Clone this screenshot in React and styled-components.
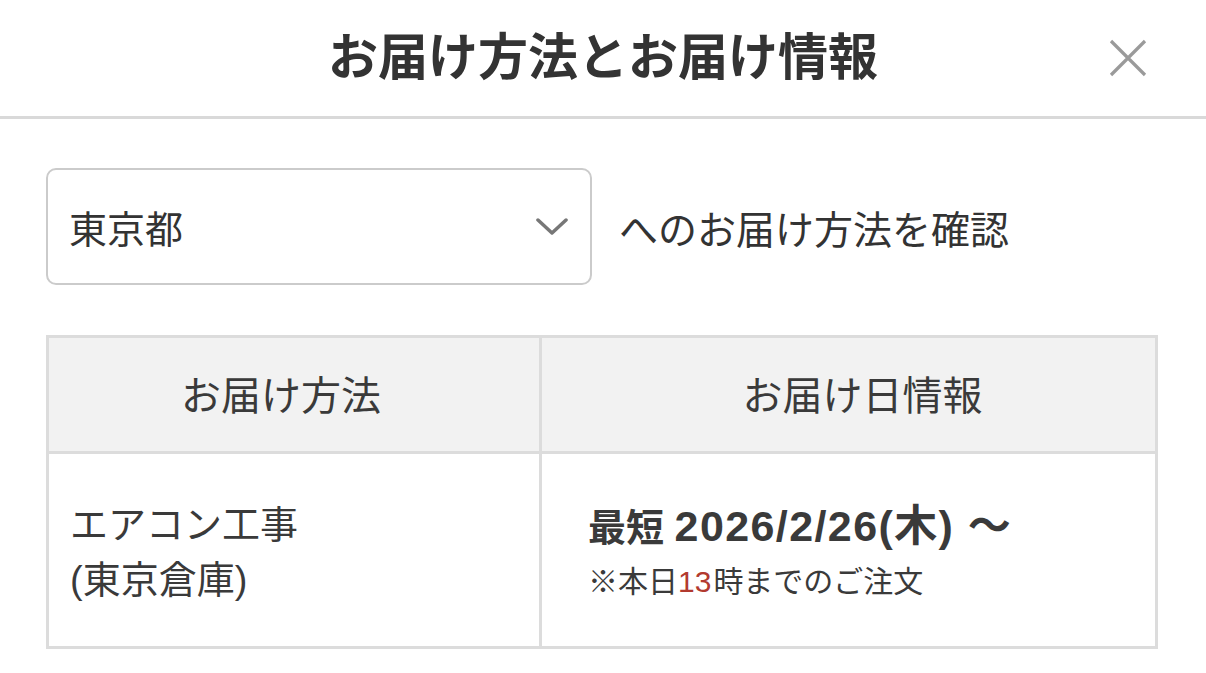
import React from "react";
import styled, { createGlobalStyle } from "styled-components";

const Global = createGlobalStyle`
  html, body { margin: 0; padding: 0; background: #fff; }
  body {
    font-family: "Liberation Sans", "Noto Sans CJK JP", sans-serif;
    color: #333;
  }
  * { box-sizing: border-box; }
`;

const Page = styled.div`
  width: 1206px;
  height: 673px;
  overflow: hidden;
  background: #fff;
`;

const Header = styled.header`
  position: relative;
  height: 119px;
  border-bottom: 3px solid #d9d9d9;
  display: flex;
  align-items: center;
  justify-content: center;
  padding-bottom: 10px;
`;

const Title = styled.h1`
  margin: 0;
  font-size: 50px;
  font-weight: 700;
  color: #333;
  letter-spacing: 0;
`;

const Close = styled.button`
  position: absolute;
  right: 58px;
  top: 38px;
  width: 40px;
  height: 40px;
  padding: 0;
  border: none;
  background: none;
  display: flex;
  align-items: center;
  justify-content: center;
`;

const Body = styled.main`
  padding: 49px 48px 0 46px;
  display: flex;
  flex-direction: column;
  gap: 50px;
`;

const SelectRow = styled.div`
  display: flex;
  align-items: center;
  gap: 27px;
`;

const Select = styled.div`
  width: 546px;
  height: 117px;
  border: 2px solid #cbcbcb;
  border-radius: 10px;
  display: flex;
  align-items: center;
  justify-content: space-between;
  padding: 0 22px 0 21px;
  font-size: 38px;
  color: #333;
`;

const Label = styled.span`
  font-size: 39px;
  color: #333;
`;

const Table = styled.div`
  display: grid;
  grid-template-columns: 490px 1fr;
  grid-template-rows: 116px 192px;
  border: 3px solid #dcdcdc;
`;

const HeadCell = styled.div`
  background: #f2f2f2;
  display: flex;
  align-items: center;
  justify-content: center;
  font-size: 40px;
  color: #3a3a3a;
  border-bottom: 3px solid #dcdcdc;
  border-left: ${(p) => (p.$first ? "none" : "3px solid #dcdcdc")};
  padding: 0 ${(p) => p.$pr || 0}px 4px ${(p) => p.$pl || 0}px;
`;

const Cell = styled.div`
  display: flex;
  flex-direction: column;
  justify-content: center;
  padding-left: ${(p) => p.$pl}px;
  padding-top: ${(p) => p.$pt || 0}px;
  border-left: ${(p) => (p.$first ? "none" : "3px solid #dcdcdc")};
  color: #3a3a3a;
`;

const Method = styled.div`
  font-size: 38px;
  line-height: 55px;
`;

const DateLine = styled.div`
  font-size: 38px;
  font-weight: 700;
  line-height: 52px;
  color: #3a3a3a;
  white-space: nowrap;
`;

const Num = styled.span`
  font-size: 43px;
  letter-spacing: 1.4px;
`;

const Note = styled.div`
  font-size: 30px;
  line-height: 56px;
  color: #3a3a3a;
`;

const Red = styled.span`
  color: #b23a2f;
  margin-right: 2px;
`;

export default function App() {
  return (
    <Page>
      <Global />
      <Header>
        <Title>お届け方法とお届け情報</Title>
        <Close aria-label="close">
          <svg width="38" height="38" viewBox="0 0 38 38">
            <path d="M2 2 L36 36 M36 2 L2 36" stroke="#9a9a9a" strokeWidth="3.2" fill="none" />
          </svg>
        </Close>
      </Header>
      <Body>
        <SelectRow>
          <Select>
            <span>東京都</span>
            <svg width="32" height="18" viewBox="0 0 32 18">
              <path d="M2 2 L16 15 L30 2" stroke="#777" strokeWidth="3.5" fill="none" strokeLinecap="round" strokeLinejoin="round" />
            </svg>
          </Select>
          <Label>へのお届け方法を確認</Label>
        </SelectRow>
        <Table>
          <HeadCell $first $pr={26}>お届け方法</HeadCell>
          <HeadCell $pl={28}>お届け日情報</HeadCell>
          <Cell $first $pl={21} $pt={5}>
            <Method>エアコン工事</Method>
            <Method>(東京倉庫)</Method>
          </Cell>
          <Cell $pl={46} $pt={10}>
            <DateLine>
              最短 <Num>2026/2/26(木) ～</Num>
            </DateLine>
            <Note>
              ※本日<Red>13</Red>時までのご注文
            </Note>
          </Cell>
        </Table>
      </Body>
    </Page>
  );
}
